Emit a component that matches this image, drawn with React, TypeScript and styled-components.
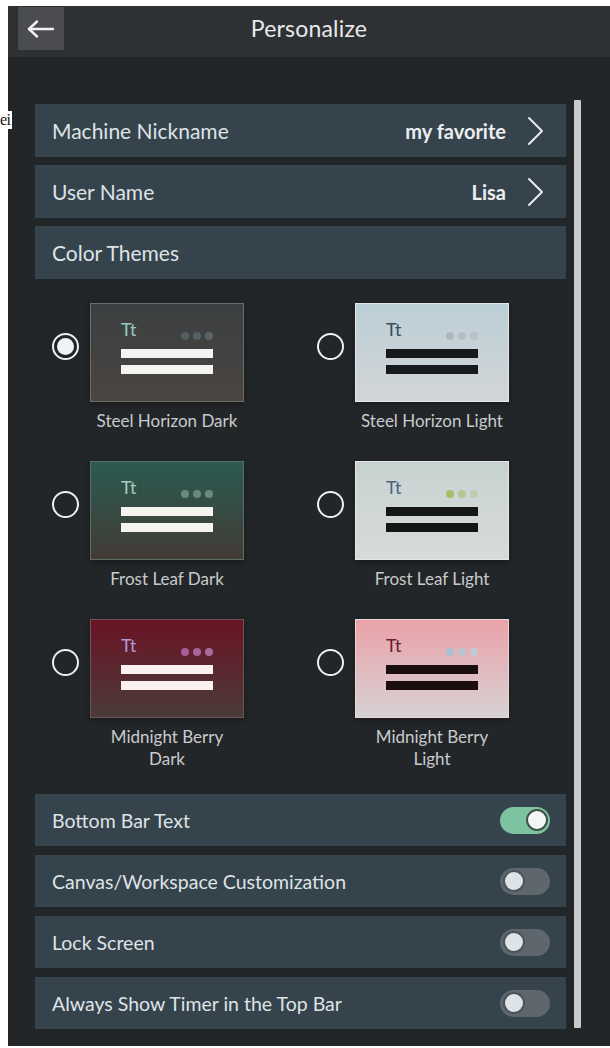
import React, { useState } from "react";
import styled, { createGlobalStyle } from "styled-components";

const GlobalStyle = createGlobalStyle`
  html, body {
    margin: 0;
    padding: 0;
    background: #ffffff;
  }
  * { box-sizing: border-box; }
  #root { width: 610px; }
`;

const FONT = `"Lato", "Open Sans", "Noto Sans", sans-serif`;

type Theme = {
  name: string;
  top: string;
  bottom: string;
  border: string;
  tt: string;
  dots: string[];
  bar: string;
};

const THEMES: Theme[] = [
  {
    name: "Steel Horizon Dark",
    top: "#3c3f41",
    bottom: "#4a4541",
    border: "#6c6c6b",
    tt: "#93cbc2",
    dots: ["#56646b", "#5b676d", "#5f6a70"],
    bar: "#f4f4f2",
  },
  {
    name: "Steel Horizon Light",
    top: "#bccfd7",
    bottom: "#d2d5d7",
    border: "#e4e8ea",
    tt: "#3a4b5c",
    dots: ["#a8b4ba", "#b0bbc0", "#b6c1c6"],
    bar: "#161a1d",
  },
  {
    name: "Frost Leaf Dark",
    top: "#2b5a50",
    bottom: "#433b36",
    border: "#5f6d68",
    tt: "#a2cbbf",
    dots: ["#6f978a", "#73928a", "#78958d"],
    bar: "#f6f4ee",
  },
  {
    name: "Frost Leaf Light",
    top: "#c7d3d1",
    bottom: "#d8dbd9",
    border: "#e3e7e6",
    tt: "#4d6380",
    dots: ["#9fbc56", "#b3c583", "#bccbab"],
    bar: "#141617",
  },
  {
    name: "Midnight Berry\nDark",
    top: "#6a1424",
    bottom: "#4b3b39",
    border: "#6d5553",
    tt: "#ad98dc",
    dots: ["#b468a9", "#b671ad", "#b57bb0"],
    bar: "#fbf1f1",
  },
  {
    name: "Midnight Berry\nLight",
    top: "#eaa2a9",
    bottom: "#d7d1d3",
    border: "#efd6d9",
    tt: "#6c1b2c",
    dots: ["#9cc4d6", "#afcad6", "#bfcfd6"],
    bar: "#1b0e11",
  },
];

const Page = styled.div`
  position: relative;
  padding: 6px 0 2px 8px;
`;

/* Overflowing label fragment that sits over the panel's left edge */
const StrayText = styled.span`
  position: absolute;
  left: 0;
  top: 111px;
  z-index: 2;
  padding-right: 1px;
  background: #ffffff;
  font-family: "Liberation Serif", serif;
  font-size: 16px;
  line-height: 18px;
  letter-spacing: -0.5px;
  color: #111;
`;

const Frame = styled.div`
  width: 602px;
  height: 1040px;
  background: #232628;
  display: flex;
  flex-direction: column;
  overflow: hidden;
`;

const Header = styled.header`
  height: 51px;
  background: #2e3134;
  display: grid;
  grid-template-columns: 1fr auto 1fr;
  align-items: start;
`;

const BackButton = styled.button`
  width: 46px;
  height: 43px;
  margin: 1px 0 0 10px;
  border: none;
  padding: 0;
  background: #4a4c4f;
  display: flex;
  align-items: center;
  justify-content: center;
  cursor: pointer;
`;

const Title = styled.h1`
  margin: 0;
  height: 51px;
  line-height: 45px;
  font-family: ${FONT};
  font-weight: 400;
  font-size: 23px;
  color: #e8e9ea;
  letter-spacing: 0.2px;
`;

const Body = styled.div`
  flex: 1;
  display: flex;
  gap: 8px;
  padding: 43px 0 0 27px;
`;

const Column = styled.div`
  width: 531px;
  padding-top: 4px;
  display: flex;
  flex-direction: column;
`;

const Scrollbar = styled.div`
  width: 7px;
  height: 928px;
  background: #c9cacb;
  border-radius: 1px;
`;

const RowGroup = styled.div`
  display: flex;
  flex-direction: column;
  gap: 8px;
`;

const Row = styled.div<{ $h?: number }>`
  height: ${(p) => p.$h ?? 53}px;
  background: #35434c;
  display: flex;
  align-items: center;
  padding: 0 16px 0 17px;
  font-family: ${FONT};
  color: #dfe3e6;
`;

const RowLabel = styled.span`
  flex: 1;
  font-size: 21px;
`;

const RowValue = styled.span`
  font-size: 20px;
  font-weight: 700;
  color: #eceef0;
  margin-right: 21px;
`;

const Chevron = styled.svg`
  width: 17px;
  height: 30px;
  margin-right: 6px;
`;

const ThemeGrid = styled.div`
  display: grid;
  grid-template-columns: 265px 265px;
  row-gap: 29px;
  margin: 24px 0 24px;
`;

const ThemeCell = styled.label`
  display: flex;
  align-items: flex-start;
  padding-left: 17px;
  gap: 11px;
  cursor: pointer;
`;

const Radio = styled.span<{ $on: boolean }>`
  width: 27px;
  height: 27px;
  margin-top: 30px;
  border-radius: 50%;
  border: 2.5px solid #eef0f1;
  flex: none;
  display: flex;
  align-items: center;
  justify-content: center;
  &::after {
    content: "";
    width: 17px;
    height: 17px;
    border-radius: 50%;
    background: ${(p) => (p.$on ? "#f2f3f4" : "transparent")};
  }
`;

const ThemeColumn = styled.div`
  display: flex;
  flex-direction: column;
  align-items: center;
  gap: 8px;
`;

const Swatch = styled.div<{ $top: string; $bottom: string; $border: string }>`
  width: 154px;
  height: 99px;
  background: linear-gradient(180deg, ${(p) => p.$top} 0%, ${(p) => p.$bottom} 100%);
  border: 1.5px solid ${(p) => p.$border};
  padding: 15px 0 0 30px;
  box-shadow: 0 2px 6px rgba(0, 0, 0, 0.35);
`;

const SwatchInner = styled.div`
  width: 92px;
  display: flex;
  flex-direction: column;
  gap: 7px;
`;

const SwatchHead = styled.div`
  height: 27px;
  display: flex;
  justify-content: space-between;
  align-items: flex-end;
  margin-bottom: -4px;
`;

const Tt = styled.span<{ $c: string }>`
  align-self: flex-start;
  font-family: ${FONT};
  font-size: 18px;
  line-height: 20px;
  font-weight: 400;
  letter-spacing: -0.5px;
  color: ${(p) => p.$c};
`;

const Dots = styled.div`
  display: flex;
  gap: 4px;
  margin-bottom: 6px;
  opacity: 0.85;
`;

const Dot = styled.span<{ $c: string }>`
  width: 8px;
  height: 8px;
  border-radius: 50%;
  background: ${(p) => p.$c};
`;

const Bar = styled.div<{ $c: string }>`
  height: 9px;
  background: ${(p) => p.$c};
`;

const ThemeName = styled.span`
  font-family: ${FONT};
  font-size: 17px;
  line-height: 22px;
  color: #c8cbcd;
  text-align: center;
  white-space: pre-line;
`;

const ToggleGroup = styled.div`
  display: flex;
  flex-direction: column;
  gap: 9px;
`;

const ToggleLabel = styled.span`
  flex: 1;
  font-size: 19.5px;
  color: #dfe3e6;
`;

const Track = styled.button<{ $on: boolean }>`
  position: relative;
  width: 50px;
  height: 27px;
  border: none;
  padding: 0;
  border-radius: 14px;
  background: ${(p) => (p.$on ? "#7ec3a0" : "#5e676d")};
  cursor: pointer;
`;

const Knob = styled.span<{ $on: boolean }>`
  position: absolute;
  top: 50%;
  transform: translateY(-50%);
  border-radius: 50%;
  ${(p) =>
    p.$on
      ? `right: 2px; width: 22px; height: 22px; background: #f4f6f5; border: 2.5px solid #3f524c;`
      : `left: 5px; width: 18px; height: 18px; background: #dde3e6; box-shadow: 0 0 0 2px rgba(40,48,54,0.35);`}
`;

function ChevronIcon() {
  return (
    <Chevron viewBox="0 0 17 30" fill="none">
      <polyline
        points="2,2 15,15 2,28"
        stroke="#e9ebec"
        strokeWidth="2"
        strokeLinecap="round"
        strokeLinejoin="round"
      />
    </Chevron>
  );
}

function BackIcon() {
  return (
    <svg width="28" height="18" viewBox="0 0 28 18" fill="none">
      <line x1="2" y1="9" x2="26" y2="9" stroke="#f1f1f1" strokeWidth="2.4" strokeLinecap="round" />
      <polyline
        points="10,1.5 2,9 10,16.5"
        stroke="#f1f1f1"
        strokeWidth="2.4"
        strokeLinecap="round"
        strokeLinejoin="round"
      />
    </svg>
  );
}

function ThemeOption({ theme, on, onPick }: { theme: Theme; on: boolean; onPick: () => void }) {
  return (
    <ThemeCell onClick={onPick}>
      <Radio $on={on} />
      <ThemeColumn>
        <Swatch $top={theme.top} $bottom={theme.bottom} $border={theme.border}>
          <SwatchInner>
            <SwatchHead>
              <Tt $c={theme.tt}>Tt</Tt>
              <Dots>
                {theme.dots.map((c, i) => (
                  <Dot key={i} $c={c} />
                ))}
              </Dots>
            </SwatchHead>
            <Bar $c={theme.bar} />
            <Bar $c={theme.bar} />
          </SwatchInner>
        </Swatch>
        <ThemeName>{theme.name}</ThemeName>
      </ThemeColumn>
    </ThemeCell>
  );
}

const TOGGLES = [
  "Bottom Bar Text",
  "Canvas/Workspace Customization",
  "Lock Screen",
  "Always Show Timer in the Top Bar",
];

export default function App() {
  const [picked, setPicked] = useState(0);
  const [toggles, setToggles] = useState([true, false, false, false]);

  return (
    <Page>
      <GlobalStyle />
      <StrayText>ei</StrayText>
      <Frame>
        <Header>
          <BackButton aria-label="Back">
            <BackIcon />
          </BackButton>
          <Title>Personalize</Title>
          <span />
        </Header>
        <Body>
          <Column>
            <RowGroup>
              <Row>
                <RowLabel>Machine Nickname</RowLabel>
                <RowValue>my favorite</RowValue>
                <ChevronIcon />
              </Row>
              <Row>
                <RowLabel>User Name</RowLabel>
                <RowValue>Lisa</RowValue>
                <ChevronIcon />
              </Row>
              <Row>
                <RowLabel>Color Themes</RowLabel>
              </Row>
            </RowGroup>
            <ThemeGrid>
              {THEMES.map((t, i) => (
                <ThemeOption key={t.name} theme={t} on={picked === i} onPick={() => setPicked(i)} />
              ))}
            </ThemeGrid>
            <ToggleGroup>
              {TOGGLES.map((label, i) => (
                <Row key={label} $h={52}>
                  <ToggleLabel>{label}</ToggleLabel>
                  <Track
                    $on={toggles[i]}
                    aria-pressed={toggles[i]}
                    onClick={() => setToggles((s) => s.map((v, j) => (j === i ? !v : v)))}
                  >
                    <Knob $on={toggles[i]} />
                  </Track>
                </Row>
              ))}
            </ToggleGroup>
          </Column>
          <Scrollbar />
        </Body>
      </Frame>
    </Page>
  );
}
